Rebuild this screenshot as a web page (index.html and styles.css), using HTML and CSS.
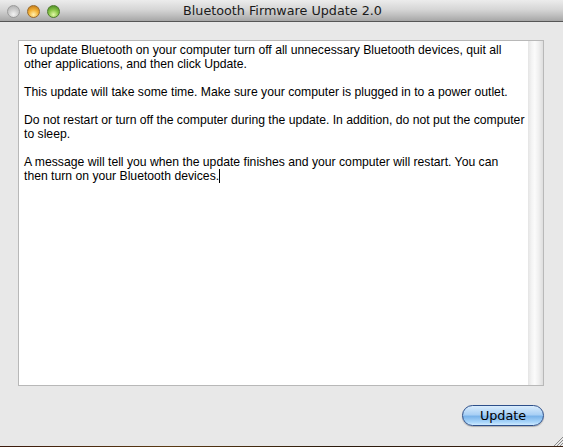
FILE: index.html
```html
<!DOCTYPE html>
<html>
<head>
<meta charset="utf-8">
<title>Bluetooth Firmware Update 2.0</title>
<link rel="stylesheet" href="styles.css">
</head>
<body>
<div class="window">
  <div class="titlebar">
    <div class="lights">
      <span class="light close"></span>
      <span class="light minimize"></span>
      <span class="light zoom"></span>
    </div>
    <div class="title">Bluetooth Firmware Update 2.0</div>
  </div>
  <div class="content">
    <div class="textview">
      <div class="text">
        <p>To update Bluetooth on your computer turn off all unnecessary Bluetooth devices, quit all other applications, and then click Update.</p>
        <p>This update will take some time. Make sure your computer is plugged in to a power outlet.</p>
        <p>Do not restart or turn off the computer during the update. In addition, do not put the computer to sleep.</p>
        <p>A message will tell you when the update finishes and your computer will restart. You can then turn on your Bluetooth devices.<span class="caret"></span></p>
      </div>
      <div class="scrolltrack"></div>
    </div>
    <div class="actions">
      <button class="btn">Update</button>
    </div>
  </div>
  <div class="grip">
    <svg width="10" height="10" viewBox="0 0 10 10">
      <path d="M10 1 L1 10 M10 4 L4 10 M10 7 L7 10" stroke="#8a8a8a" stroke-width="1"/>
    </svg>
  </div>
  <div class="desk"></div>
</div>
</body>
</html>
```
FILE: styles.css
```css
html, body {
  margin: 0;
  padding: 0;
  width: 563px;
  height: 447px;
  overflow: hidden;
}

.window {
  position: relative;
  width: 563px;
  height: 447px;
  display: flex;
  flex-direction: column;
  background: #e8e8e8;
}

.titlebar {
  height: 21px;
  flex: none;
  position: relative;
  background: linear-gradient(to bottom, #ececec 0%, #d6d6d6 45%, #bdbdbd 75%, #a6a6a6 100%);
  border-bottom: 1px solid #565656;
  display: flex;
  align-items: center;
}

.lights {
  display: flex;
  gap: 7px;
  padding-left: 7px;
  padding-top: 1px;
}

.light {
  width: 13px;
  height: 13px;
  border-radius: 50%;
  display: block;
  box-sizing: border-box;
}

.light.close {
  background: radial-gradient(circle at 50% 75%, #f2f2f2 0%, #cfcfcf 45%, #a9a9a9 100%);
  border: 1px solid #9a9a9a;
}

.light.minimize {
  background: radial-gradient(circle at 50% 78%, #fff1b0 0%, #f4b43a 45%, #b86b0c 100%);
  border: 1px solid #9a6a2a;
}

.light.zoom {
  background: radial-gradient(circle at 50% 78%, #e3f8a8 0%, #8cc74a 45%, #3d7f1a 100%);
  border: 1px solid #4d7a2c;
}

.title {
  position: absolute;
  left: 0;
  right: 0;
  top: 0;
  height: 21px;
  line-height: 21px;
  text-align: center;
  font-family: "DejaVu Sans", sans-serif;
  font-size: 12.75px;
  color: #1a1a1a;
  padding-left: 2px;
}

.content {
  flex: 1;
  display: flex;
  flex-direction: column;
  padding: 18px 19px 0 18px;
}

.textview {
  height: 344px;
  display: flex;
  background: #fff;
  border: 1px solid #b8b8b8;
}

.text {
  flex: 1;
  padding: 2px 3px 0 5px;
  font-family: "Liberation Sans", Arial, sans-serif;
  font-size: 12.2px;
  line-height: 14px;
  color: #000;
}

.text p {
  margin: 0 0 14px 0;
}

.caret {
  display: inline-block;
  width: 1px;
  height: 14px;
  background: #000;
  vertical-align: -3px;
}

.scrolltrack {
  width: 15px;
  flex: none;
  background: linear-gradient(to right, #e4e4e4 0%, #f4f4f4 25%, #fbfbfb 45%, #f0f0f0 70%, #dedede 100%);
}

.actions {
  display: flex;
  justify-content: flex-end;
  padding-top: 19px;
}

.btn {
  width: 82px;
  height: 21px;
  border-radius: 11px;
  border: 1px solid #2d4f8a;
  background: linear-gradient(to bottom, #d9ecfc 0%, #a9d0f5 45%, #7bb4ea 55%, #a8d5fa 85%, #cfeaff 100%);
  font-family: "DejaVu Sans", sans-serif;
  font-size: 12.75px;
  color: #000;
  padding: 0 0 1px 0;
  margin-right: 0;
  box-shadow: 0 1px 1px rgba(0, 0, 0, 0.25);
}

.grip {
  position: absolute;
  right: 0;
  bottom: 1px;
  width: 10px;
  height: 10px;
}

.grip svg {
  display: block;
}

.desk {
  position: absolute;
  left: 0;
  right: 0;
  bottom: 0;
  height: 1px;
  background: linear-gradient(to right, #3a1a0c, #5a3a14 30%, #2a1a0c 60%, #3a2010);
}
```
